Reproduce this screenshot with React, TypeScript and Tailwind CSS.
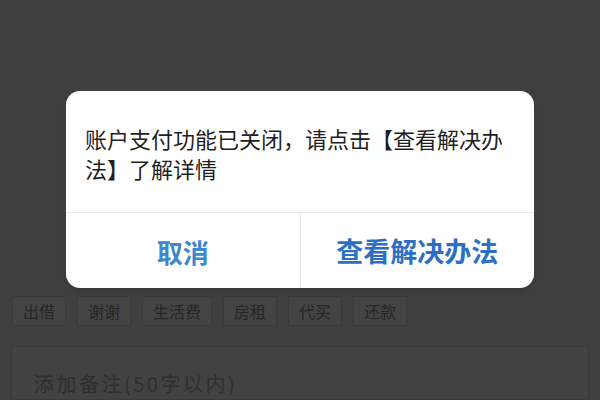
import React from 'react';

const tags = ['出借', '谢谢', '生活费', '房租', '代买', '还款'];

const App: React.FC = () => {
  return (
    <div
      className="w-[600px] h-[400px] overflow-hidden bg-[#3f3f3f] flex flex-col"
      style={{ fontFamily: '"Noto Sans CJK SC", "Noto Sans", sans-serif' }}
    >
      {/* Dialog */}
      <div className="mt-[91px] mx-[66px] h-[198px] bg-white rounded-[14px] flex flex-col shadow-md">
        <div className="h-[122px] pt-[32px] pl-[19px] pr-[18px] text-[22px] leading-[30px] text-[#1f1f1f] border-b border-[#e6e6e6]">
          账户支付功能已关闭，请点击【查看解决办法】了解详情
        </div>
        <div className="flex-1 flex">
          <button className="flex-1 flex items-center justify-center pt-[2px] text-[26px] font-semibold text-[#3d88cc] border-r border-[#e6e6e6]">
            取消
          </button>
          <button className="flex-1 flex items-center justify-center pt-[2px] text-[27px] font-bold text-[#2b70c2]">
            查看解决办法
          </button>
        </div>
      </div>

      {/* Quick tags under the overlay */}
      <div className="mt-[8px] pl-[12px] flex gap-[11px]">
        {tags.map((t) => (
          <div
            key={t}
            className="h-[30px] px-[10px] flex items-center bg-[#444444] border border-[#3a3a3a] text-[16px] text-[#262626]"
          >
            {t}
          </div>
        ))}
      </div>

      {/* Remark input */}
      <div className="mt-[20px] mx-[11px] flex-1 bg-[#424242] border border-[#3a3a3a] pl-[22px] pt-[22px]">
        <span className="text-[20px] tracking-[2.5px] text-[#2e2e2e]">添加备注(50字以内)</span>
      </div>
    </div>
  );
};

export default App;
